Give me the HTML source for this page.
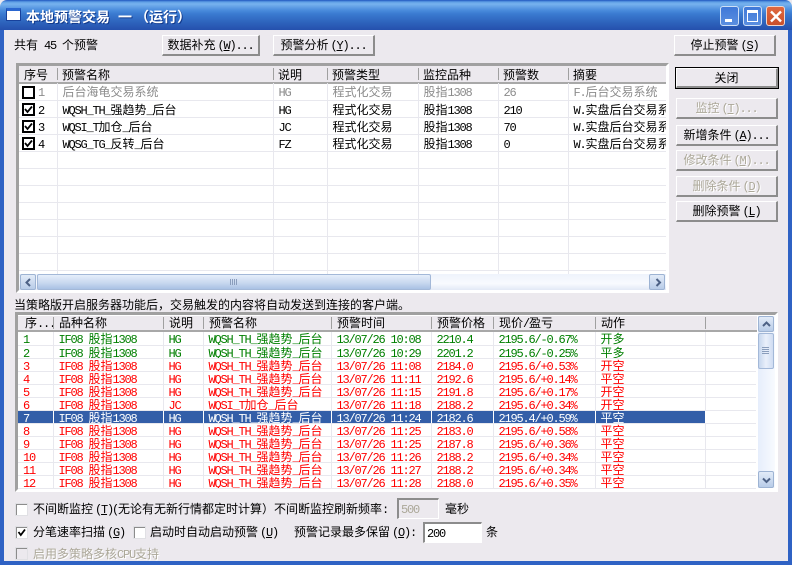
<!DOCTYPE html>
<html><head><meta charset="utf-8">
<style>
html,body{margin:0;padding:0;width:792px;height:565px;overflow:hidden;background:#ece9ee}
*{box-sizing:border-box}
body{position:relative;font:12px/13px "WenQuanYi Zen Hei","Noto Sans CJK SC",sans-serif;color:#000}
b{font-weight:normal;font-family:"Liberation Mono",monospace;font-size:12px;letter-spacing:-1.2px;line-height:0}
.k{margin-left:2px}
.a{position:absolute;white-space:pre}
.btn{position:absolute;height:21px;background:#ece9ee;border-style:solid;border-width:1px 2px 2px 1px;border-color:#fff #8c8c8c #8c8c8c #fff;text-align:center;line-height:18px;white-space:pre}
.dis{color:#aca899;text-shadow:1px 1px 0 #fff}
.frame{position:absolute;background:#fff;border-style:solid;border-width:3px;border-color:#a0a0a0 #fff #fff #a0a0a0;overflow:hidden}
table{border-collapse:collapse;table-layout:fixed;position:absolute;left:0}
td{padding:0 0 0 5px;overflow:hidden;white-space:pre;border-right:1px solid #e8e8ee;border-bottom:1px solid #e8e8ee}
.t1 td{height:17px;line-height:14px;padding-top:2px}
.t2 td{height:13px;line-height:10px;padding-top:2px}
.hd{position:absolute;left:0;top:0;background:#ece9ee;border-bottom:2px solid #a8a8a8}
.hd span{position:absolute;top:0;white-space:pre}
.hd i{position:absolute;top:2px;width:1px;height:12px;background:#a0a0a0}
.gr td{color:#007f00}.rd td{color:#ff0000}.g1 td{color:#8c8c8c}
.sel td{background:#335ea8;color:#fff;border-right-color:#fff}
.sel td.e{background:#fff}
.cb{position:absolute;width:13px;height:13px;background:#fff;border:2px solid #000}
.cb svg,.ck svg{position:absolute;left:0;top:0}
.ck{position:absolute;width:13px;height:13px;background:#fff;border-style:solid;border-width:2px 1px 1px 2px;border-color:#8c8c8c #fff #fff #8c8c8c;outline:1px solid #e0e0e4;outline-offset:-1px}
.arrow{position:absolute;background:linear-gradient(#e2ebf8,#b8cce8);border:1px solid #9db3d3;border-radius:2px}
</style></head>
<body>
<!-- window frame -->
<div class="a" style="left:0;top:0;width:792px;height:30px;background:linear-gradient(#1f56bf 0,#5f9fe6 2px,#77b2ee 4px,#4b8ddd 10px,#3a7ad0 14px,#2e64bd 22px,#2550ad 30px);border-radius:7px 7px 0 0"></div>
<div class="a" style="left:0;top:30px;width:4px;height:535px;background:#2f62c4"></div>
<div class="a" style="left:788px;top:30px;width:4px;height:535px;background:#2f62c4"></div>
<div class="a" style="left:0;top:561px;width:792px;height:4px;background:#2f62c4"></div>
<!-- title icon -->
<div class="a" style="left:6px;top:8px;width:15px;height:13px;background:#fff;border:1px solid #17419c;border-top:3px solid #2a66d0"></div>
<div class="a" style="left:26px;top:9px;font-weight:bold;color:#fff;text-shadow:1px 1px 0 #123a8c;line-height:16px;font-size:14px">本地预警交易</div>
<div class="a" style="left:118px;top:9px;font-weight:bold;color:#fff;text-shadow:1px 1px 0 #123a8c;line-height:16px;font-size:14px">一</div>
<div class="a" style="left:135px;top:9px;font-weight:bold;color:#fff;text-shadow:1px 1px 0 #123a8c;line-height:16px;font-size:14px">（运行）</div>
<!-- window buttons -->
<div class="a" style="left:720px;top:6px;width:19px;height:20px;background:linear-gradient(#3f78d8,#5b8fe0);border:1px solid #cfe0f6;border-radius:3px"><div class="a" style="left:4px;top:12px;width:7px;height:3px;background:#fff"></div></div>
<div class="a" style="left:743px;top:6px;width:19px;height:20px;background:linear-gradient(#3f78d8,#5b8fe0);border:1px solid #cfe0f6;border-radius:3px"><div class="a" style="left:3px;top:3px;width:11px;height:12px;border:1px solid #fff;border-top:3px solid #fff"></div></div>
<div class="a" style="left:766px;top:6px;width:19px;height:20px;background:linear-gradient(#e0683f,#c9502b);border:1px solid #f0d6cc;border-radius:3px"><svg class="a" style="left:2px;top:3px" width="14" height="13" viewBox="0 0 14 13"><path d="M2 1.5L12 11.5M12 1.5L2 11.5" stroke="#fff" stroke-width="2.4" fill="none"/></svg></div>

<div class="a" style="left:14px;top:38px">共有<b> 45 </b>个预警</div>
<div class="btn" style="left:162px;top:35px;width:98px">数据补充<b class="k">(<u>W</u>)...</b></div>
<div class="btn" style="left:273px;top:35px;width:102px">预警分析<b class="k">(<u>Y</u>)...</b></div>
<div class="btn" style="left:674px;top:35px;width:102px">停止预警<b class="k">(<u>S</u>)</b></div>

<div class="btn" style="left:676px;top:68px;width:102px;outline:1px solid #000;outline-offset:0;border-color:#fff #8c8c8c #8c8c8c #fff;height:20px;line-height:17px">关闭</div>
<div class="btn dis" style="left:676px;top:98px;width:102px">监控<b class="k">(<u>T</u>)...</b></div>
<div class="btn" style="left:676px;top:125px;width:102px">新增条件<b class="k">(<u>A</u>)...</b></div>
<div class="btn dis" style="left:676px;top:150px;width:102px">修改条件<b class="k">(<u>M</u>)...</b></div>
<div class="btn dis" style="left:676px;top:176px;width:102px">删除条件<b class="k">(<u>D</u>)</b></div>
<div class="btn" style="left:676px;top:201px;width:102px">删除预警<b class="k">(<u>L</u>)</b></div>

<!-- top list -->
<div class="frame" style="left:16px;top:63px;width:653px;height:230px">
  <div class="hd" style="width:648px;height:18px;line-height:17px">
    <span style="left:5px">序号</span><i style="left:38px"></i>
    <span style="left:43px">预警名称</span><i style="left:254px"></i>
    <span style="left:259px">说明</span><i style="left:308px"></i>
    <span style="left:313px">预警类型</span><i style="left:399px"></i>
    <span style="left:404px">监控品种</span><i style="left:479px"></i>
    <span style="left:484px">预警数</span><i style="left:549px"></i>
    <span style="left:554px">摘要</span>
  </div>
  <table class="t1" style="top:17px;width:647px">
    <colgroup><col style="width:38px"><col style="width:216px"><col style="width:54px"><col style="width:91px"><col style="width:80px"><col style="width:70px"><col style="width:98px"></colgroup>
    <tr class="g1"><td style="padding-left:19px"><b>1</b></td><td>后台海龟交易系统</td><td><b>HG</b></td><td>程式化交易</td><td>股指<b>1308</b></td><td><b>26</b></td><td style="border-right:0"><b>F.</b>后台交易系统<b>  ±</b></td></tr>
    <tr><td style="padding-left:19px"><b>2</b></td><td><b>WQSH_TH_</b>强趋势<b>_</b>后台</td><td><b>HG</b></td><td>程式化交易</td><td>股指<b>1308</b></td><td><b>210</b></td><td style="border-right:0"><b>W.</b>实盘后台交易系统</td></tr>
    <tr><td style="padding-left:19px"><b>3</b></td><td><b>WQSI_T</b>加仓<b>_</b>后台</td><td><b>JC</b></td><td>程式化交易</td><td>股指<b>1308</b></td><td><b>70</b></td><td style="border-right:0"><b>W.</b>实盘后台交易系统</td></tr>
    <tr><td style="padding-left:19px"><b>4</b></td><td><b>WQSG_TG_</b>反转<b>_</b>后台</td><td><b>FZ</b></td><td>程式化交易</td><td>股指<b>1308</b></td><td><b>0</b></td><td style="border-right:0"><b>W.</b>实盘后台交易系统</td></tr>
    <tr><td></td><td></td><td></td><td></td><td></td><td></td><td style="border-right:0"></td></tr>
    <tr><td></td><td></td><td></td><td></td><td></td><td></td><td style="border-right:0"></td></tr>
    <tr><td></td><td></td><td></td><td></td><td></td><td></td><td style="border-right:0"></td></tr>
    <tr><td></td><td></td><td></td><td></td><td></td><td></td><td style="border-right:0"></td></tr>
    <tr><td></td><td></td><td></td><td></td><td></td><td></td><td style="border-right:0"></td></tr>
    <tr><td></td><td></td><td></td><td></td><td></td><td></td><td style="border-right:0"></td></tr>
    <tr><td></td><td></td><td></td><td></td><td></td><td></td><td style="border-right:0"></td></tr>
    <tr><td></td><td></td><td></td><td></td><td></td><td></td><td style="border-right:0"></td></tr>
  </table>
  <!-- hscroll -->
  <div class="a" style="left:0;top:208px;width:648px;height:16px;background:linear-gradient(#eef3fc,#f8fafe 60%,#e2e9f6)"></div>
  <div class="arrow" style="left:1px;top:208px;width:16px;height:16px"><svg class="a" style="left:3px;top:3px" width="9" height="9"><path d="M6 1L2.500 4.500L6 8" stroke="#4d6185" stroke-width="2" fill="none"/></svg></div>
  <div class="a" style="left:18px;top:208px;width:394px;height:16px;background:linear-gradient(#e6eefb,#c6d6ee 60%,#a9c1e4);border:1px solid #a3b8d8;border-radius:2px"></div>
  <div class="a" style="left:211px;top:213px;width:8px;height:6px;background:repeating-linear-gradient(90deg,#8a9dbc 0 1px,transparent 1px 2px)"></div>
  <div class="arrow" style="left:630px;top:208px;width:16px;height:16px"><svg class="a" style="left:4px;top:3px" width="9" height="9"><path d="M2.500 1L6 4.500L2.500 8" stroke="#4d6185" stroke-width="2" fill="none"/></svg></div>
</div>
<!-- checkboxes -->
<div class="cb" style="left:22px;top:86px"></div>
<div class="cb" style="left:22px;top:103px"><svg width="9" height="9"><path d="M1 4L3.500 7L8 1.500" stroke="#000" stroke-width="1.800" fill="none"/></svg></div>
<div class="cb" style="left:22px;top:120px"><svg width="9" height="9"><path d="M1 4L3.500 7L8 1.500" stroke="#000" stroke-width="1.800" fill="none"/></svg></div>
<div class="cb" style="left:22px;top:137px"><svg width="9" height="9"><path d="M1 4L3.500 7L8 1.500" stroke="#000" stroke-width="1.800" fill="none"/></svg></div>

<div class="a" style="left:14px;top:298px">当策略版开启服务器功能后，交易触发的内容将自动发送到连接的客户端。</div>

<!-- bottom list -->
<div class="frame" style="left:15px;top:312px;width:763px;height:180px">
  <div class="hd" style="width:739px;height:16px;line-height:13px;top:1px">
    <span style="left:7px">序<b>...</b></span><i style="left:35px;top:1px"></i>
    <span style="left:41px">品种名称</span><i style="left:145px;top:1px"></i>
    <span style="left:151px">说明</span><i style="left:185px;top:1px"></i>
    <span style="left:191px">预警名称</span><i style="left:313px;top:1px"></i>
    <span style="left:319px">预警时间</span><i style="left:413px;top:1px"></i>
    <span style="left:419px">预警价格</span><i style="left:475px;top:1px"></i>
    <span style="left:481px">现价<b>/</b>盈亏</span><i style="left:577px;top:1px"></i>
    <span style="left:583px">动作</span><i style="left:687px;top:1px"></i>
  </div>
  <table class="t2" style="top:17px;width:738px">
    <colgroup><col style="width:35px"><col style="width:110px"><col style="width:40px"><col style="width:128px"><col style="width:100px"><col style="width:62px"><col style="width:102px"><col style="width:110px"><col style="width:51px"></colgroup>
    <tr class="gr"><td><b>1</b></td><td><b>IF08 </b>股指<b>1308</b></td><td><b>HG</b></td><td><b>WQSH_TH_</b>强趋势<b>_</b>后台</td><td><b>13/07/26 10:08</b></td><td><b>2210.4</b></td><td><b>2195.6/-0.67%</b></td><td>开多</td><td class="e" style="border-right:0"></td></tr>
    <tr class="gr"><td><b>2</b></td><td><b>IF08 </b>股指<b>1308</b></td><td><b>HG</b></td><td><b>WQSH_TH_</b>强趋势<b>_</b>后台</td><td><b>13/07/26 10:29</b></td><td><b>2201.2</b></td><td><b>2195.6/-0.25%</b></td><td>平多</td><td class="e" style="border-right:0"></td></tr>
    <tr class="rd"><td><b>3</b></td><td><b>IF08 </b>股指<b>1308</b></td><td><b>HG</b></td><td><b>WQSH_TH_</b>强趋势<b>_</b>后台</td><td><b>13/07/26 11:08</b></td><td><b>2184.0</b></td><td><b>2195.6/+0.53%</b></td><td>开空</td><td class="e" style="border-right:0"></td></tr>
    <tr class="rd"><td><b>4</b></td><td><b>IF08 </b>股指<b>1308</b></td><td><b>HG</b></td><td><b>WQSH_TH_</b>强趋势<b>_</b>后台</td><td><b>13/07/26 11:11</b></td><td><b>2192.6</b></td><td><b>2195.6/+0.14%</b></td><td>平空</td><td class="e" style="border-right:0"></td></tr>
    <tr class="rd"><td><b>5</b></td><td><b>IF08 </b>股指<b>1308</b></td><td><b>HG</b></td><td><b>WQSH_TH_</b>强趋势<b>_</b>后台</td><td><b>13/07/26 11:15</b></td><td><b>2191.8</b></td><td><b>2195.6/+0.17%</b></td><td>开空</td><td class="e" style="border-right:0"></td></tr>
    <tr class="rd"><td><b>6</b></td><td><b>IF08 </b>股指<b>1308</b></td><td><b>JC</b></td><td><b>WQSI_T</b>加仓<b>_</b>后台</td><td><b>13/07/26 11:18</b></td><td><b>2188.2</b></td><td><b>2195.6/+0.34%</b></td><td>开空</td><td class="e" style="border-right:0"></td></tr>
    <tr class="sel"><td><b>7</b></td><td><b>IF08 </b>股指<b>1308</b></td><td><b>HG</b></td><td><b>WQSH_TH_</b>强趋势<b>_</b>后台</td><td><b>13/07/26 11:24</b></td><td><b>2182.6</b></td><td><b>2195.4/+0.59%</b></td><td>平空</td><td class="e" style="border-right:0"></td></tr>
    <tr class="rd"><td><b>8</b></td><td><b>IF08 </b>股指<b>1308</b></td><td><b>HG</b></td><td><b>WQSH_TH_</b>强趋势<b>_</b>后台</td><td><b>13/07/26 11:25</b></td><td><b>2183.0</b></td><td><b>2195.6/+0.58%</b></td><td>平空</td><td class="e" style="border-right:0"></td></tr>
    <tr class="rd"><td><b>9</b></td><td><b>IF08 </b>股指<b>1308</b></td><td><b>HG</b></td><td><b>WQSH_TH_</b>强趋势<b>_</b>后台</td><td><b>13/07/26 11:25</b></td><td><b>2187.8</b></td><td><b>2195.6/+0.36%</b></td><td>平空</td><td class="e" style="border-right:0"></td></tr>
    <tr class="rd"><td><b>10</b></td><td><b>IF08 </b>股指<b>1308</b></td><td><b>HG</b></td><td><b>WQSH_TH_</b>强趋势<b>_</b>后台</td><td><b>13/07/26 11:26</b></td><td><b>2188.2</b></td><td><b>2195.6/+0.34%</b></td><td>平空</td><td class="e" style="border-right:0"></td></tr>
    <tr class="rd"><td><b>11</b></td><td><b>IF08 </b>股指<b>1308</b></td><td><b>HG</b></td><td><b>WQSH_TH_</b>强趋势<b>_</b>后台</td><td><b>13/07/26 11:27</b></td><td><b>2188.2</b></td><td><b>2195.6/+0.34%</b></td><td>平空</td><td class="e" style="border-right:0"></td></tr>
    <tr class="rd"><td><b>12</b></td><td><b>IF08 </b>股指<b>1308</b></td><td><b>HG</b></td><td><b>WQSH_TH_</b>强趋势<b>_</b>后台</td><td><b>13/07/26 11:28</b></td><td><b>2188.0</b></td><td><b>2195.6/+0.35%</b></td><td>平空</td><td class="e" style="border-right:0"></td></tr>
  </table>
  <!-- vscroll -->
  <div class="a" style="left:740px;top:1px;width:17px;height:172px;background:linear-gradient(90deg,#e6eefc,#f8fafe)"></div>
  <div class="arrow" style="left:740px;top:1px;width:16px;height:16px"><svg class="a" style="left:3px;top:3px" width="9" height="9"><path d="M1 6L4.500 2.500L8 6" stroke="#4d6185" stroke-width="2" fill="none"/></svg></div>
  <div class="a" style="left:740px;top:18px;width:16px;height:36px;background:linear-gradient(90deg,#c6d6ee,#eaf0fb 50%,#cfdcf2);border:1px solid #a3b8d8;border-radius:2px"></div>
  <div class="a" style="left:744px;top:32px;width:7px;height:7px;background:repeating-linear-gradient(#8a9dbc 0 1px,transparent 1px 2px)"></div>
  <div class="arrow" style="left:740px;top:156px;width:16px;height:17px"><svg class="a" style="left:3px;top:4px" width="9" height="9"><path d="M1 2.500L4.500 6L8 2.500" stroke="#4d6185" stroke-width="2" fill="none"/></svg></div>
</div>

<!-- bottom controls -->
<div class="ck" style="left:15px;top:503px"></div>
<div class="a" style="left:33px;top:502px">不间断监控<b class="k">(<u>T</u>)</b></div>
<div class="a" style="left:112px;top:502px"><b>(</b>无论有无新行情都定时计算）不间断监控刷新频率<b>:</b></div>
<div class="a" style="left:397px;top:498px;width:42px;height:21px;background:#ece9ee;border-style:solid;border-width:2px 1px 1px 2px;border-color:#8c8c8c #fff #fff #8c8c8c;color:#aca899;padding:2px 0 0 2px;line-height:14px"><b>500</b></div>
<div class="a" style="left:445px;top:502px">毫秒</div>

<div class="ck" style="left:15px;top:526px"><svg width="10" height="10"><path d="M1.500 4L3.800 7L8 1.500" stroke="#000" stroke-width="1.800" fill="none"/></svg></div>
<div class="a" style="left:33px;top:525px">分笔速率扫描<b class="k">(<u>G</u>)</b></div>
<div class="ck" style="left:133px;top:526px"></div>
<div class="a" style="left:150px;top:525px">启动时自动启动预警<b class="k">(<u>U</u>)</b></div>
<div class="a" style="left:294px;top:525px">预警记录最多保留<b class="k">(<u>O</u>):</b></div>
<div class="a" style="left:423px;top:522px;width:59px;height:21px;background:#fff;border-style:solid;border-width:2px 1px 1px 2px;border-color:#8c8c8c #fff #fff #8c8c8c;padding:2px 0 0 2px;line-height:14px"><b>200</b></div>
<div class="a" style="left:486px;top:525px">条</div>

<div class="ck" style="left:15px;top:547px;background:#ece9ee"></div>
<div class="a dis" style="left:33px;top:547px">启用多策略多核<b>CPU</b>支持</div>
</body></html>
